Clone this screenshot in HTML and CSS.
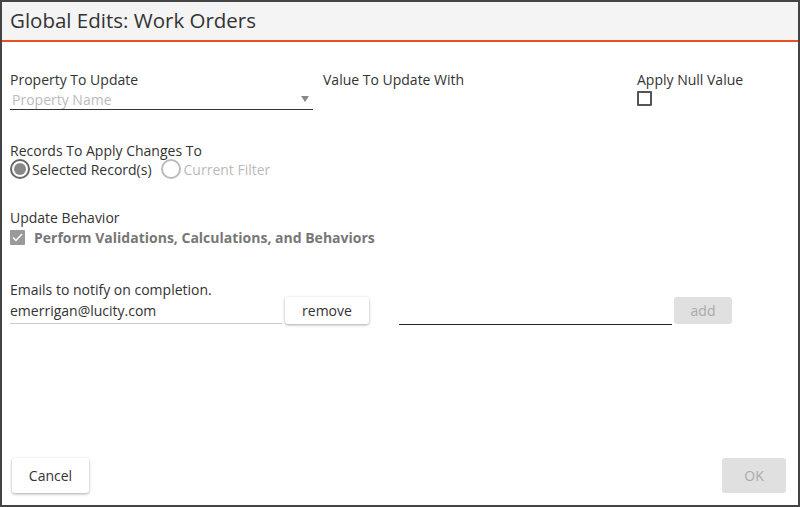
FILE: index.html
```html
<!DOCTYPE html>
<html lang="en">
<head>
    <meta charset="UTF-8">
    <title>Global Edits: Work Orders</title>
    <link rel="stylesheet" href="styles.css">
</head>
<body>

<div class="dialog">
    <div class="dialog-header">Global Edits: Work Orders</div>

    <div class="dialog-body">
        <div class="field-row">
            <div class="field">
                <label class="field-label">Property To Update</label>
                <div class="select">
                    <span class="placeholder">Property Name</span>
                    <span class="caret"></span>
                </div>
            </div>
            <div class="field">
                <label class="field-label">Value To Update With</label>
            </div>
            <div class="field">
                <label class="field-label">Apply Null Value</label>
                <span class="checkbox"></span>
            </div>
        </div>

        <div class="section records">
            <div class="field-label">Records To Apply Changes To</div>
            <div class="radio-row">
                <span class="radio checked"></span>
                <span class="radio-text">Selected Record(s)</span>
                <span class="radio"></span>
                <span class="radio-text disabled">Current Filter</span>
            </div>
        </div>

        <div class="section behavior">
            <div class="field-label">Update Behavior</div>
            <div class="check-row">
                <span class="checkbox checked">
                    <svg width="11" height="9" viewBox="0 0 11 9"><path d="M1 4.5 L4 7.5 L10 1" fill="none" stroke="#fff" stroke-width="1.5"/></svg>
                </span>
                <span class="check-text">Perform Validations, Calculations, and Behaviors</span>
            </div>
        </div>

        <div class="section emails">
            <div class="field-label">Emails to notify on completion.</div>
            <div class="email-row">
                <div class="email-input">emerrigan@lucity.com</div>
                <button class="btn raised remove">remove</button>
                <div class="email-new"></div>
                <button class="btn flat-disabled add">add</button>
            </div>
        </div>
    </div>

    <div class="dialog-footer">
        <button class="btn raised cancel">Cancel</button>
        <button class="btn flat-disabled ok">OK</button>
    </div>
</div>

</body>
</html>
```

FILE: styles.css
```css
body {
    margin: 0;
    padding: 0;
    font-family: "Open Sans", Arial, sans-serif;
    color: #333;
    background-color: white;
}

.dialog {
    height: 507px;
    box-sizing: border-box;
    border: 2px solid #444;
    display: flex;
    flex-direction: column;
}

.dialog-header {
    background-color: #f4f4f4;
    height: 38px;
    line-height: 36px;
    padding-left: 8px;
    font-size: 20.5px;
    color: #333;
    border-bottom: 2px solid #e8501e;
}

.dialog-body {
    flex: 1;
    padding: 0 8px;
}

.field-label {
    display: block;
    font-size: 14px;
    line-height: 19px;
    color: #333;
}

/* Primera fila */
.field-row {
    display: grid;
    grid-template-columns: 303px 304px 1fr;
    column-gap: 10px;
    margin-top: 28px;
}

.select {
    display: flex;
    align-items: center;
    justify-content: space-between;
    height: 20px;
    border-bottom: 1px solid #333;
    padding-left: 2px;
}

.placeholder {
    font-size: 14px;
    color: #bbb;
}

.caret {
    width: 0;
    height: 0;
    border-left: 4px solid transparent;
    border-right: 4px solid transparent;
    border-top: 6px solid #888;
    margin-right: 4px;
}

.checkbox {
    display: flex;
    align-items: center;
    justify-content: center;
    width: 15px;
    height: 15px;
    box-sizing: border-box;
    border: 2px solid #555;
    border-radius: 1px;
    margin-top: 2px;
}

.checkbox.checked {
    background-color: #9a9a9a;
    border-color: #9a9a9a;
    margin-top: 0;
}

/* Registros */
.records {
    margin-top: 31px;
}

.radio-row {
    display: flex;
    align-items: center;
    height: 20px;
    margin-top: -1px;
}

.radio {
    width: 20px;
    height: 20px;
    box-sizing: border-box;
    border: 2px solid #bbb;
    border-radius: 50%;
    position: relative;
}

.radio.checked {
    border-color: #666;
}

.radio.checked::after {
    content: "";
    position: absolute;
    left: 2px;
    top: 2px;
    width: 12px;
    height: 12px;
    border-radius: 50%;
    background-color: #888;
}

.radio-text {
    font-size: 14px;
    margin: 0 9px 0 2px;
}

.radio-text.disabled {
    color: #bbb;
    margin-left: 3px;
}

.behavior {
    margin-top: 29px;
}

.check-row {
    display: flex;
    align-items: center;
    height: 20px;
}

.check-text {
    font-size: 14px;
    font-weight: bold;
    color: #777;
    margin-left: 9px;
}

/* Correos */
.emails {
    margin-top: 33px;
}

.email-row {
    display: flex;
    align-items: flex-end;
    margin-top: -2px;
}

.email-input {
    width: 272px;
    font-size: 14px;
    line-height: 19px;
    padding-bottom: 3px;
    margin-bottom: 1px;
    border-bottom: 1px solid #ccc;
    color: #333;
}

.email-new {
    width: 273px;
    height: 24px;
    border-bottom: 1px solid #222;
    margin-left: 30px;
}

.btn {
    font-family: "Open Sans", Arial, sans-serif;
    font-size: 14px;
    border: none;
    border-radius: 3px;
    padding: 0;
    cursor: pointer;
}

.btn.raised {
    background-color: white;
    color: #333;
    box-shadow: 0 1px 3px rgba(0, 0, 0, 0.35);
}

.btn.flat-disabled {
    background-color: #e0e0e0;
    color: #aaa;
}

.remove {
    width: 84px;
    height: 27px;
    margin-left: 3px;
    margin-bottom: 1px;
}

.add {
    width: 58px;
    height: 27px;
    margin-left: 2px;
    margin-bottom: 1px;
}

.dialog-footer {
    display: flex;
    justify-content: space-between;
    padding: 0 12px 12px 10px;
}

.cancel {
    width: 77px;
    height: 35px;
}

.ok {
    width: 64px;
    height: 35px;
}
```
